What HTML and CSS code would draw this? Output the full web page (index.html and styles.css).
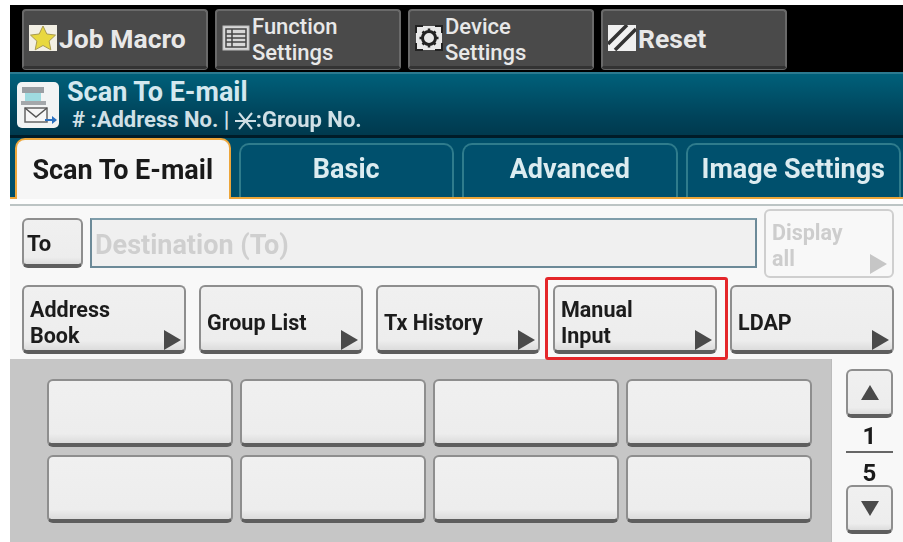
FILE: index.html
```html
<!DOCTYPE html>
<html lang="en">
<head>
<meta charset="utf-8">
<title>Scan To E-mail</title>
<link rel="stylesheet" href="styles.css">
</head>
<body>
<div class="screen">
  <div class="topbar">
    <div class="top-btn">
      <svg class="top-icon" viewBox="0 0 28 26"><rect width="28" height="26" fill="#f2efe4"/><path d="M14 1l3.800 8 8.700 1.100-6.400 6 1.700 8.700-7.800-4.300-7.800 4.300 1.700-8.700-6.400-6 8.700-1.100z" fill="#e8d840" stroke="#a89a50" stroke-width="1"/></svg>
      <span class="top-one">Job Macro</span>
    </div>
    <div class="top-btn">
      <svg class="top-icon" viewBox="0 0 28 26"><rect x="1" y="1" width="26" height="24" fill="#d8d8d8" stroke="#bbb"/><path d="M4 4h20v18H4zM10 4v18M4 9h20M4 13h20M4 17h20" fill="none" stroke="#444" stroke-width="1.500"/></svg>
      <span class="top-two">Function<br>Settings</span>
    </div>
    <div class="top-btn">
      <svg class="top-icon" viewBox="0 0 28 26"><rect x="1" y="1" width="26" height="24" fill="#e8e8e8"/><path d="M1 8V1h7M20 1h7v7M27 18v7h-7M8 25H1v-7" fill="none" stroke="#222" stroke-width="2"/><circle cx="14" cy="13" r="6.500" fill="none" stroke="#222" stroke-width="3"/><path d="M14 3.500v3M14 19.500v3M4.500 13h3M20.500 13h3M7.500 6.500l2 2M18.500 17.500l2 2M20.500 6.500l-2 2M9.500 17.500l-2 2" stroke="#222" stroke-width="2.500"/></svg>
      <span class="top-two">Device<br>Settings</span>
    </div>
    <div class="top-btn">
      <svg class="top-icon" viewBox="0 0 28 26"><rect width="28" height="26" fill="#f0f0f0"/><path d="M0 19L19 0M7 25L28 4" stroke="#333" stroke-width="3.500"/></svg>
      <span class="top-one">Reset</span>
    </div>
  </div>
  <div class="header">
    <svg class="mode-icon" viewBox="0 0 42 46"><rect width="42" height="46" rx="5" fill="#f2f4f4"/><rect x="5" y="5" width="22" height="6" fill="#9a9fa3"/><rect x="8" y="11" width="16" height="8" fill="#9fdbe0"/><rect x="4" y="19" width="25" height="4" fill="#a4a8ab"/><rect x="8" y="26" width="22" height="14" fill="#f6f6f6" stroke="#666" stroke-width="1.500"/><path d="M8 26l11 9 11-9" fill="none" stroke="#555" stroke-width="1.500"/><path d="M28 37h7v-3l5 4-5 4v-3h-7z" fill="#2a70c0"/></svg>
    <div class="header-text">
      <div class="header-title">Scan To E-mail</div>
      <div class="header-sub"># :Address No. | <svg class="group-mark" viewBox="0 0 21 18"><path d="M4 1l13 16M17 1L4 17M0 9h21" fill="none" stroke="#d0e0e6" stroke-width="2"/></svg>:Group No.</div>
    </div>
  </div>
  <div class="tabs">
    <div class="tab tab-active">Scan To E-mail</div>
    <div class="tab">Basic</div>
    <div class="tab">Advanced</div>
    <div class="tab">Image Settings</div>
  </div>
  <div class="tab-gap"></div>
  <div class="panel">
    <div class="dest-row">
      <div class="btn btn-to">To</div>
      <div class="dest-input">Destination (To)</div>
      <div class="btn btn-nav btn-off">Display<br>all<span class="arrow"></span></div>
    </div>
    <div class="nav-row">
      <div class="btn btn-nav">Address<br>Book<span class="arrow"></span></div>
      <div class="btn btn-nav">Group List<span class="arrow"></span></div>
      <div class="btn btn-nav">Tx History<span class="arrow"></span></div>
      <div class="btn btn-nav">Manual<br>Input<span class="arrow"></span><span class="callout"></span></div>
      <div class="btn btn-nav">LDAP<span class="arrow"></span></div>
    </div>
  </div>
  <div class="lower">
    <div class="slots">
      <div class="btn"></div><div class="btn"></div><div class="btn"></div><div class="btn"></div>
      <div class="btn"></div><div class="btn"></div><div class="btn"></div><div class="btn"></div>
    </div>
    <div class="pager">
      <div class="btn btn-page"><span class="tri-up"></span></div>
      <div class="page-num page-cur">1</div>
      <div class="page-num">5</div>
      <div class="btn btn-page"><span class="tri-down"></span></div>
    </div>
  </div>
</div>
</body>
</html>
```
FILE: styles.css
```css
* { box-sizing: border-box; }
html, body { height: 100%; }
body {
  margin: 0;
  padding: 5px 0 0 10px;
  background: #fff;
  overflow: hidden;
  font-family: Roboto, "Liberation Sans", sans-serif;
  font-weight: 700;
}
.screen {
  width: 893px;
  height: 537px;
  display: flex;
  flex-direction: column;
  filter: blur(0.6px);
}
.topbar {
  height: 67px;
  flex: none;
  background: #000;
  display: flex;
  gap: 7px;
  padding: 4px 0 0 12px;
}
.top-btn {
  width: 186px;
  height: 60px;
  display: flex;
  align-items: center;
  gap: 2px;
  padding: 0 0 1px 5px;
  color: #e8e8e8;
  border-radius: 4px;
  background: #4a4a4a;
  border: 2px solid #6a6a6a;
  border-bottom: 3px solid #333;
  box-shadow: 0 1px 0 #666;
}
.top-icon { width: 28px; height: 26px; flex: none; }
.top-one { font-size: 26.500px; }
.top-two { font-size: 22px; line-height: 26px; font-weight: 500; margin-top: 3px; }
.header {
  height: 66px;
  flex: none;
  display: flex;
  align-items: center;
  gap: 8px;
  padding: 0 0 0 7px;
  background: linear-gradient(#00607a, #00435a 70%, #003a4e);
  border-top: 2px solid #2c7a90;
  border-bottom: 3px solid #001c28;
  color: #d8eaf0;
}
.mode-icon { width: 42px; height: 46px; flex: none; }
.header-text { display: flex; flex-direction: column; }
.header-title { font-size: 27px; line-height: 30px; color: #d4e8ef; }
.header-sub { font-size: 22px; line-height: 26px; padding-left: 5px; color: #d0e0e6; white-space: nowrap; }
.group-mark { width: 21px; height: 18px; vertical-align: -3px; }
.tabs {
  height: 61px;
  flex: none;
  display: flex;
  gap: 8px;
  padding: 0 2px 0 5px;
  align-items: flex-end;
  background: #004f6a;
  border-bottom: 2px solid #eda63a;
}
.tab {
  flex: 1;
  height: 54px;
  display: flex;
  align-items: center;
  justify-content: center;
  padding-bottom: 4px;
  font-size: 27px;
  color: #dcecf0;
  background: #00506d;
  border: 2px solid #2f7c8c;
  border-bottom: 0;
  border-radius: 10px 10px 0 0;
}
.tab-active {
  height: 61px;
  margin-bottom: -2px;
  padding-bottom: 0;
  color: #1a1a1a;
  background: #f6f6f6;
  border: 2px solid #eda63a;
  border-bottom: 0;
  position: relative;
}
.tab-gap {
  height: 7px;
  flex: none;
  background: #fdfdfd;
  border-bottom: 2px solid #bcc4c4;
}
.panel {
  height: 153px;
  flex: none;
  padding: 3px 9px 0 12px;
  background: #f8f8f8;
  display: flex;
  flex-direction: column;
  gap: 7px;
}
.btn {
  position: relative;
  border-radius: 6px;
  background: linear-gradient(#f0f0f0, #ededed 85%, #dcdcdc);
  border: 2px solid #8e8e8e;
  border-bottom: 4px solid #5e5e5e;
}
.dest-row { display: flex; align-items: flex-start; gap: 7px; height: 69px; }
.btn-to {
  width: 61px;
  height: 50px;
  margin-top: 9px;
  display: flex;
  align-items: center;
  padding: 3px 0 0 3px;
  font-size: 22px;
  color: #1a1a1a;
}
.dest-input {
  flex: 1;
  height: 50px;
  margin-top: 9px;
  display: flex;
  align-items: center;
  padding: 3px 0 0 3px;
  font-size: 27px;
  color: #cfcfcf;
  background: #f0f0f0;
  border: 2px solid #6c8a98;
  border-top-color: #7f9daa;
}
.btn-nav {
  width: 164px;
  height: 69px;
  display: flex;
  flex-direction: column;
  justify-content: center;
  padding: 8px 0 0 6px;
  font-size: 21.500px;
  line-height: 26px;
  color: #1c1c1c;
}
.nav-row { display: flex; justify-content: space-between; }
.btn-off {
  width: 130px;
  padding-top: 4px;
  color: #cdcdcd;
  background: #f8f8f8;
  border: 2px solid #cfcfcf;
}
.arrow {
  position: absolute;
  right: 3px;
  bottom: 0;
  border-left: 17px solid #4a4a4a;
  border-top: 10px solid transparent;
  border-bottom: 10px solid transparent;
}
.btn-off .arrow { border-left-color: #c6c6c6; right: 5px; bottom: 2px; }
.callout {
  position: absolute;
  left: -10px;
  right: -13px;
  top: -10px;
  bottom: -10px;
  border: 3px solid #e4262a;
  border-radius: 3px;
}
.lower { flex: 1; display: flex; min-height: 0; }
.slots {
  width: 822px;
  flex: none;
  padding: 20px 0 0 37px;
  background: #c6c6c6;
  border-right: 1px solid #bbb;
  display: grid;
  grid-template-columns: repeat(4, 186px);
  grid-auto-rows: 68px;
  gap: 8px 7px;
  align-content: start;
}
.pager {
  flex: 1;
  background: #f8f8f8;
  padding: 10px 0 0 14px;
  display: flex;
  flex-direction: column;
}
.btn-page {
  width: 47px;
  height: 49px;
  flex: none;
  display: flex;
  align-items: center;
  justify-content: center;
}
.tri-up, .tri-down {
  border-left: 9px solid transparent;
  border-right: 9px solid transparent;
}
.tri-up { border-bottom: 15px solid #4a4a4a; }
.tri-down { border-top: 15px solid #4a4a4a; }
.page-num {
  width: 47px;
  height: 32px;
  text-align: center;
  font-size: 24px;
  line-height: 41px;
  color: #1a1a1a;
}
.page-cur { height: 35px; line-height: 37px; border-bottom: 2px solid #666; }
```
